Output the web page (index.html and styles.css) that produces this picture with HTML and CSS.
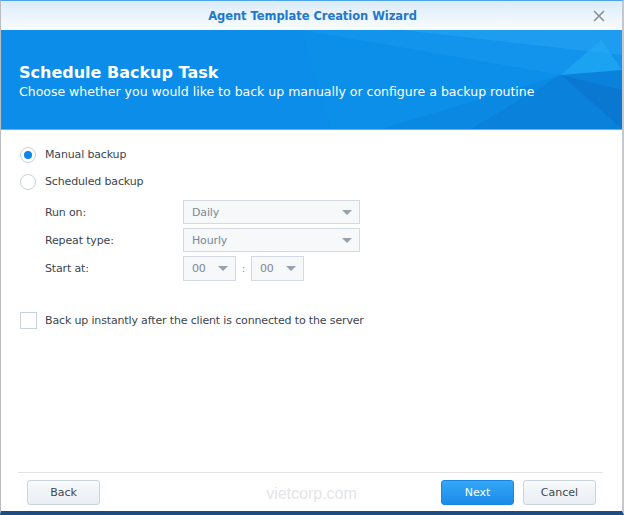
FILE: index.html
```html
<!DOCTYPE html>
<html>
<head>
<meta charset="utf-8">
<link rel="stylesheet" href="styles.css">
</head>
<body>
<div class="window">
  <div class="titlebar">
    <span class="title">Agent Template Creation Wizard</span>
    <svg class="close" width="12" height="12" viewBox="0 0 12 12"><path d="M1 1L11 11M11 1L1 11" stroke="#8a9096" stroke-width="1.6" fill="none"/></svg>
  </div>
  <div class="banner">
    <svg class="banner-art" width="621" height="99" viewBox="0 0 621 99" preserveAspectRatio="none">
      <polygon points="300,0 621,0 621,40 560,45" fill="#1a9af0" opacity="0.55"/>
      <polygon points="400,0 621,0 621,25" fill="#2aa6f3" opacity="0.5"/>
      <polygon points="560,45 621,40 621,99 470,99" fill="#0a7fd8" opacity="0.8"/>
      <polygon points="560,45 621,99 621,60" fill="#0a73cc" opacity="0.7"/>
      <polygon points="560,45 470,99 380,99" fill="#0b86dd" opacity="0.6"/>
      <polygon points="300,0 560,45 380,99 330,99" fill="#0f94ea" opacity="0.35"/>
      <polygon points="560,45 600,10 621,40" fill="#23b0f5" opacity="0.5"/>
    </svg>
    <h1 class="banner-title">Schedule Backup Task</h1>
    <p class="banner-sub">Choose whether you would like to back up manually or configure a backup routine</p>
  </div>
  <div class="content">
    <label class="opt-row">
      <span class="radio checked"><span class="dot"></span></span>
      <span class="opt-label">Manual backup</span>
    </label>
    <label class="opt-row">
      <span class="radio"></span>
      <span class="opt-label">Scheduled backup</span>
    </label>
    <div class="form">
      <div class="form-row">
        <span class="form-label">Run on:</span>
        <div class="select wide"><span>Daily</span><span class="arrow"></span></div>
      </div>
      <div class="form-row">
        <span class="form-label">Repeat type:</span>
        <div class="select wide"><span>Hourly</span><span class="arrow"></span></div>
      </div>
      <div class="form-row">
        <span class="form-label">Start at:</span>
        <div class="time">
          <div class="select small"><span>00</span><span class="arrow"></span></div>
          <span class="colon">:</span>
          <div class="select small"><span>00</span><span class="arrow"></span></div>
        </div>
      </div>
    </div>
    <label class="opt-row check-row">
      <span class="checkbox"></span>
      <span class="opt-label">Back up instantly after the client is connected to the server</span>
    </label>
  </div>
  <div class="footer">
    <div class="separator"></div>
    <div class="buttons">
      <button class="btn">Back</button>
      <div class="spacer"></div>
      <button class="btn primary">Next</button>
      <button class="btn">Cancel</button>
    </div>
    <div class="watermark">vietcorp.com</div>
  </div>
</div>
</body>
</html>
```
FILE: styles.css
```css
* { box-sizing: border-box; }
html, body { margin: 0; padding: 0; background: #ffffff; }
body { font-family: "DejaVu Sans", Verdana, sans-serif; }

.window {
  width: 624px;
  height: 515px;
  display: flex;
  flex-direction: column;
  border-top: 1px solid #4ea4ea;
  border-left: 1px solid #b9bcc0;
  border-right: 2px solid #c5c8cc;
  border-bottom: 4px solid #1d4c85;
  background: #fff;
  position: relative;
}

.titlebar {
  height: 29px;
  flex: none;
  display: flex;
  align-items: center;
  justify-content: center;
  background: linear-gradient(#dcecfb, #f9fcff);
  position: relative;
}
.title {
  font-weight: bold;
  font-size: 11.5px;
  color: #1f78cd;
  letter-spacing: -0.05px;
  padding-left: 2px;
}
.close {
  position: absolute;
  right: 17px;
  top: 9px;
}

.banner {
  height: 100px;
  flex: none;
  background: #0b8de9;
  border-bottom: 1px solid #5bb6f0;
  position: relative;
  overflow: hidden;
  padding: 33px 0 0 18px;
  color: #fff;
}
.banner-art { position: absolute; left: 0; top: 0; }
.banner-title {
  position: relative;
  margin: 0;
  font-size: 16px;
  font-weight: bold;
  line-height: 20px;
}
.banner-sub {
  position: relative;
  margin: 0;
  font-size: 12.5px;
  line-height: 17px;
}

.content {
  flex: 1;
  padding: 11px 0 0 19px;
  font-size: 11px;
  letter-spacing: -0.15px;
  color: #3b4550;
}
.opt-row {
  display: flex;
  align-items: center;
  height: 27px;
}
.radio {
  width: 16px;
  height: 16px;
  border-radius: 50%;
  border: 1px solid #c9d1da;
  background: #fff;
  display: flex;
  align-items: center;
  justify-content: center;
  margin-right: 9px;
}
.radio .dot {
  width: 8px;
  height: 8px;
  border-radius: 50%;
  background: #0d86e6;
}
.opt-label { line-height: 14px; }

.form {
  padding: 5px 0 0 25px;
  display: flex;
  flex-direction: column;
  gap: 4px;
}
.form-row {
  display: flex;
  align-items: center;
  height: 24px;
}
.form-label { width: 138px; }
.select {
  height: 24px;
  border: 1px solid #d3dae2;
  background: #f6f8fa;
  display: flex;
  align-items: center;
  justify-content: space-between;
  padding: 0 7px 0 8px;
  color: #7d8892;
}
.select.wide { width: 177px; }
.select.small { width: 53px; height: 25px; }
.arrow {
  width: 0;
  height: 0;
  border-left: 5px solid transparent;
  border-right: 5px solid transparent;
  border-top: 5px solid #98a2ab;
}
.time { display: flex; align-items: center; }
.colon { width: 15px; text-align: center; color: #8a949d; }

.check-row { margin-top: 27px; }
.checkbox {
  width: 17px;
  height: 17px;
  border: 1px solid #c9d1da;
  background: #fff;
  margin-right: 8px;
}

.footer {
  height: 39px;
  flex: none;
  position: relative;
}
.separator {
  height: 1px;
  margin: 0 19px 0 17px;
  background: #e1e4e7;
}
.buttons {
  display: flex;
  padding: 7px 26px 0 26px;
  gap: 9px;
}
.spacer { flex: 1; }
.btn {
  font-family: "DejaVu Sans", Verdana, sans-serif;
  font-size: 11px;
  width: 73px;
  height: 25px;
  border: 1px solid #cbd3dc;
  border-radius: 3px;
  background: linear-gradient(#f7f9fb, #eaeef3);
  color: #3f4850;
  padding: 0;
}
.btn.primary {
  border-color: #1a84e0;
  background: linear-gradient(#35a7f6, #1a8ce9);
  color: #fff;
}
.watermark {
  position: absolute;
  left: 0;
  right: 0;
  top: 13px;
  text-align: center;
  font-family: "Liberation Sans", Arial, sans-serif;
  font-size: 16px;
  color: #e3e5e7;
  pointer-events: none;
}
```
